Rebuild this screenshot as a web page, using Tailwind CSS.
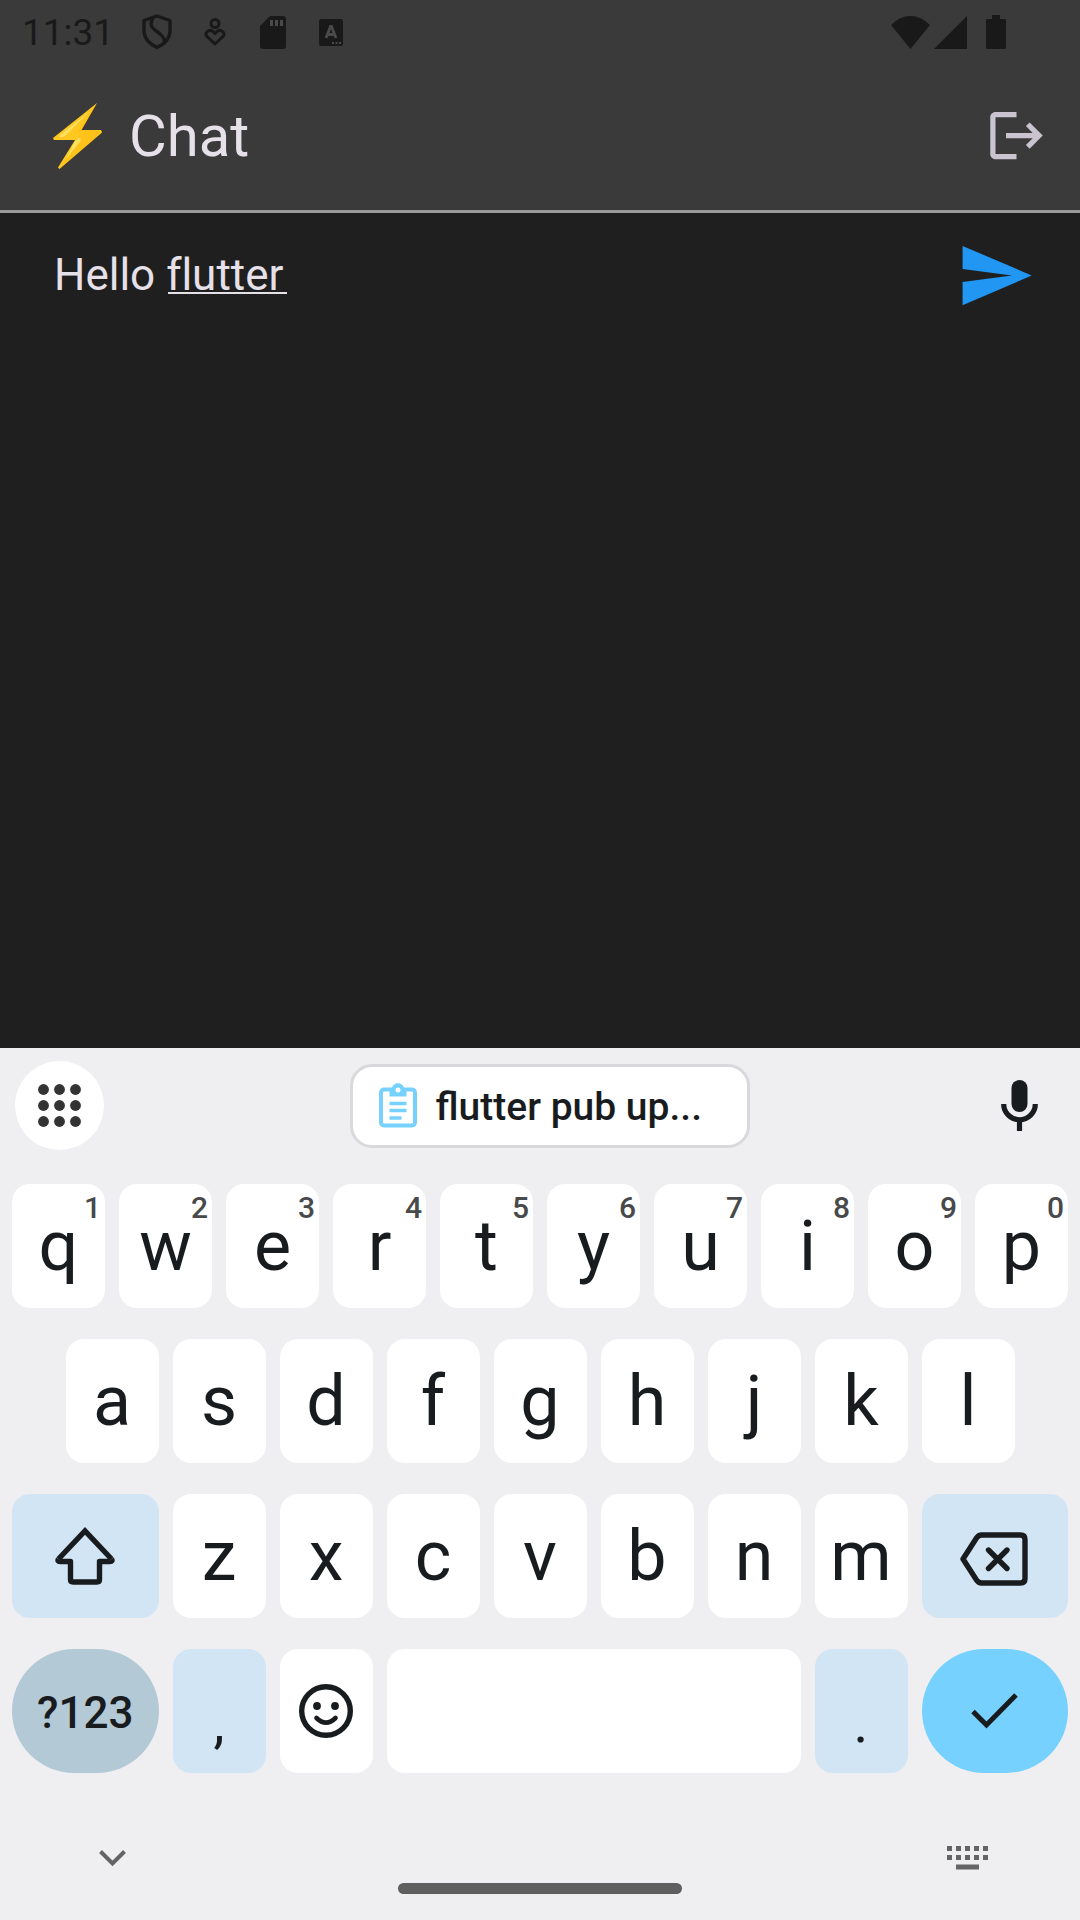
<!DOCTYPE html>
<html lang="en">
<head>
<meta charset="utf-8">
<meta name="viewport" content="width=device-width, initial-scale=1">
<title>Chat</title>
<script src="https://cdn.jsdelivr.net/npm/@tailwindcss/browser@4"></script>
</head>
<body class="flex min-h-screen flex-col bg-[#1f1f1f] font-['Roboto',sans-serif] text-[#e6e0e9]">
<header class="border-b-3 border-[#9a9a9a] bg-[#3a3a3a]">
  <div class="flex h-16 items-center justify-between pl-[22px] pr-[74px] text-[#191919]">
    <div class="flex items-center">
      <time class="mr-[28px] pt-[2px] text-[37px] leading-[64px]">11:31</time>
      <svg class="mr-[32px] h-[36px] w-[30px]" viewBox="0 0 30 36" fill="none" stroke="currentColor" stroke-width="3.4" stroke-linejoin="round"><path d="M15 2 28 6.500V18Q27 28 15 33.500Q3 28 2 18V6.500Z"/><path d="M11 4C6 13 12 15 17 19C22 23 24 26 22 30"/></svg>
      <svg class="mr-[34px] h-[28px] w-[22px]" viewBox="0 0 22 28" fill="none" stroke="currentColor" stroke-width="3"><circle cx="11" cy="5.500" r="4"/><path stroke-linejoin="round" d="M11 26 3 18.500C0 15 5 10.500 9 13.500L11 15.500 13 13.500C17 10.500 22 15 19 18.500Z"/></svg>
      <svg class="mr-[33px] h-[33px] w-[26px]" viewBox="0 0 26 33"><path fill="currentColor" d="M10 0H23Q26 0 26 3V30Q26 33 23 33H3Q0 33 0 30V10Z"/><path fill="#4a4a4a" d="M10 4h3v6h-3zM15 4h3v6h-3zM20 4h3v6h-3z"/></svg>
      <svg class="h-[27px] w-6" viewBox="0 0 24 27"><rect width="24" height="27" rx="2.500" fill="currentColor"/><path d="M7 19 11.500 7.500h1L17 19M8.800 15.500h6.500" fill="none" stroke="#4a4a4a" stroke-width="2.800"/><path fill="#4a4a4a" d="M13 23h2v2h-2zM16.500 23h2v2h-2zM20 23h2v2h-2z"/></svg>
    </div>
    <div class="flex items-center">
      <svg class="mr-1 h-[33px] w-[39px]" viewBox="0 0 39 33" fill="currentColor"><path d="M0 9Q9 0 19.500 0T39 9L19.500 33Z"/></svg>
      <svg class="mr-[19px] h-[33px] w-[33px]" viewBox="0 0 33 33" fill="currentColor"><path d="M33 0V33H0Z"/></svg>
      <svg class="h-[34px] w-5" viewBox="0 0 20 34" fill="currentColor"><path d="M6 0h8v4h4.500Q20 4 20 5.500V32.500Q20 34 18.500 34h-17Q0 34 0 32.500V5.500Q0 4 1.500 4H6Z"/></svg>
    </div>
  </div>
  <div class="flex h-[146px] items-center justify-between pb-[3px] pl-[53px] pr-8">
    <h1 class="flex items-center gap-[26px] text-[58px] leading-[64px]">
      <svg class="h-[66px] w-[50px]" viewBox="0 0 50 66" aria-label="Lightning"><path d="M44 0 0 35 1 37H22L5 64.500 6.500 66 49 29.500 48 27H28.500Z" fill="#ffc820"/><path d="M44 0 28.500 27H48L49 29.500 6.500 66 26 36 25 33 31 29.500H24Z" fill="#fdb50b" opacity=".3"/><path d="M37 8 6 33Q8 36 13 32Z" fill="#ffe05f"/><path d="M26 35Q29 35 27 39L13 56 22 38Z" fill="#ffe05f"/></svg>
      <span>Chat</span>
    </h1>
    <button type="button" aria-label="Log out" class="text-[#cac4d0]"><svg class="size-[63px]" viewBox="0 0 24 24" fill="currentColor"><path d="M17 7l-1.410 1.410L18.170 11H8v2h10.170l-2.580 2.580L17 17l5-5zM4 5h8V3H4c-1.100 0-2 .9-2 2v14c0 1.100.9 2 2 2h8v-2H4V5z"/></svg></button>
  </div>
</header>

<main class="flex-1">
  <form class="flex h-[125px] items-center pl-[54px] pr-[45px]">
    <div class="relative min-w-0 flex-1">
      <input type="text" aria-label="Message" value="Hello flutter" class="block h-16 w-full bg-transparent pb-[2px] text-[44px] outline-none [font-variant-ligatures:none]">
      <span class="absolute left-[114px] top-[48px] h-[2px] w-[119px] bg-[#e6e0e9]"></span>
    </div>
    <button type="button" aria-label="Send" class="text-[#2196f3]"><svg class="size-[79px]" viewBox="0 0 24 24" fill="currentColor"><path d="M2 21 23 12 2 3v7l15 2-15 2z"/></svg></button>
  </form>
</main>

<section aria-label="Keyboard" class="bg-[#efeff2] text-[#191c1e]">
  <div class="flex h-[116px] items-center justify-between pb-[1px] pl-[15px] pr-[42px]">
    <button type="button" aria-label="Tools" class="flex size-[89px] items-center justify-center rounded-full bg-white text-[#333333]">
      <svg class="size-[43px]" viewBox="0 0 43 43" fill="currentColor"><circle cx="5.500" cy="5.500" r="5.400"/><circle cx="21.500" cy="5.500" r="5.400"/><circle cx="37.500" cy="5.500" r="5.400"/><circle cx="5.500" cy="21.500" r="5.400"/><circle cx="21.500" cy="21.500" r="5.400"/><circle cx="37.500" cy="21.500" r="5.400"/><circle cx="5.500" cy="37.500" r="5.400"/><circle cx="21.500" cy="37.500" r="5.400"/><circle cx="37.500" cy="37.500" r="5.400"/></svg>
    </button>
    <button type="button" class="ml-[-6px] flex h-[84px] w-[400px] items-center gap-[19px] rounded-[22px] border-3 border-[#d9d9db] bg-white pl-[26px] text-[39px] font-medium">
      <svg class="h-[45px] w-[38px]" viewBox="0 0 38 45"><rect x="2" y="6.500" width="34" height="36" rx="3" fill="none" stroke="#76d1ff" stroke-width="4"/><path d="M10.500 5H13C14 -1.500 24 -1.500 25 5h2.500v8.500h-17z" fill="#76d1ff"/><circle cx="19" cy="7" r="2.500" fill="#fff"/><path d="M10.500 20.500h17M10.500 27.500h17M10.500 35h12" stroke="#76d1ff" stroke-width="3.600"/></svg>
      <span class="pt-1">flutter pub up...</span>
    </button>
    <button type="button" aria-label="Voice input"><svg class="h-[51px] w-[37px]" viewBox="0 0 37 51"><rect x="10.500" width="16" height="32" rx="8" fill="currentColor"/><path d="M2.700 24a15.800 15.800 0 0 0 31.600 0M18.500 39v12" fill="none" stroke="currentColor" stroke-width="5.200"/></svg></button>
  </div>

  <div id="keys" class="grid grid-cols-20 gap-x-[14px] gap-y-[31px] px-3 pt-5 text-[70px] leading-[124px]"></div>

  <div class="grid grid-cols-[1fr_284px_1fr] items-start pb-[26px] pt-[73px] text-[#646464]">
    <div class="pl-[99px] pt-1"><button type="button" aria-label="Hide keyboard" class="block"><svg class="h-[17px] w-[27px]" viewBox="0 0 27 17" fill="none" stroke="currentColor" stroke-width="4"><path d="M1.500 1.500 13.500 13.500 25.500 1.500"/></svg></button></div>
    <span class="mt-[37px] h-[11px] rounded-full bg-[#5f5f5f]"></span>
    <div class="flex justify-end pr-[92px]"><button type="button" aria-label="Switch keyboard"><svg class="h-[24px] w-[41px]" viewBox="0 0 41 24" fill="currentColor"><path d="M0 0h5v5H0zM9 0h5v5H9zM18 0h5v5h-5zM27 0h5v5h-5zM36 0h5v5h-5zM0 9h5v5H0zM9 9h5v5H9zM18 9h5v5h-5zM27 9h5v5h-5zM36 9h5v5h-5zM9 18.500h23v5H9z"/></svg></button></div>
  </div>
</section>

<script>
const base = 'relative flex h-[124px] items-center justify-center ';
const white = base + 'rounded-[18px] bg-white col-span-2 ';
const tint = base + 'rounded-[18px] bg-[#d2e5f4] ';
const icons = {
  shift: '<svg class="h-[58px] w-[60px]" viewBox="0 0 60 58" fill="none" stroke="currentColor" stroke-width="5.400" stroke-linejoin="round"><path stroke-linejoin="miter" d="M3.500 32 30 4 56.500 32"/><path d="M3.500 32Q2 34.500 5 34.500H15.500V52.500Q15.500 55 18 55H42Q44.500 55 44.500 52.500V34.500H55Q58 34.500 56.500 32"/></svg>',
  del: '<svg class="h-[54px] w-[68px]" viewBox="0 0 68 54" fill="none" stroke="currentColor" stroke-width="5.400" stroke-linecap="round" stroke-linejoin="round"><path d="M3 27 16.500 6Q18.500 3 21.500 3H60.500Q65 3 65 7.500V46.500Q65 51 60.500 51H21.500Q18.500 51 16.500 48Z"/><path d="M28.500 18 47 36.500M47 18 28.500 36.500"/></svg>',
  smile: '<svg class="size-[54px]" viewBox="0 0 54 54"><circle cx="27" cy="27" r="24.300" fill="none" stroke="currentColor" stroke-width="5.400"/><circle cx="18" cy="22" r="3.900" fill="currentColor"/><circle cx="36" cy="22" r="3.900" fill="currentColor"/><path d="M17.500 34Q27 43.500 36.500 34" fill="none" stroke="currentColor" stroke-width="4.600" stroke-linecap="round"/></svg>',
  check: '<svg class="h-[36px] w-[47px]" viewBox="0 0 47 36" fill="none" stroke="currentColor" stroke-width="5"><path d="M2 18.500 15.500 32 45 2"/></svg>'
};
let html = '';
const key = (cls, body, label) => { html += `<button type="button" class="${cls}" aria-label="${label}">${body}</button>`; };
[...'qwertyuiop'].forEach((c, i) => key(white, `${c}<span class="absolute right-1 top-[6px] text-[30px] leading-[36px] font-medium text-[#47494b]">${(i + 1) % 10}</span>`, c));
[...'asdfghjkl'].forEach((c, i) => key(white + (i ? '' : 'col-start-2'), c, c));
key(tint + 'col-span-3 col-start-1', icons.shift, 'Shift');
[...'zxcvbnm'].forEach(c => key(white, c, c));
key(tint + 'col-span-3 pr-[2px] pt-[6px]', icons.del, 'Delete');
key(base + 'col-span-3 rounded-full bg-[#b4c9d6] pt-1 text-[44px] font-medium', '?123', 'Symbols');
key(tint + 'col-span-2 pt-[24px] text-[56px]', ',', 'Comma');
key(white, icons.smile, 'Emoji');
key(base + 'col-span-8 rounded-[18px] bg-white', '', 'Space');
key(tint + 'col-span-2 pt-[24px] text-[56px]', '.', 'Period');
key(base + 'col-span-3 rounded-full bg-[#76d1ff]', icons.check, 'Done');
document.getElementById('keys').innerHTML = html;
</script>
</body>
</html>
